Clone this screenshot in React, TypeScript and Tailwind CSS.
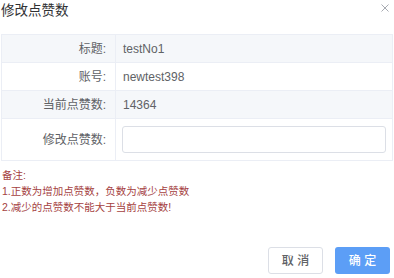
import type { ReactNode } from 'react';

const font = { fontFamily: '"Liberation Sans", "Noto Sans CJK SC", sans-serif' };

function Row({
  label,
  children,
  gray = false,
  last = false,
}: {
  label: string;
  children: ReactNode;
  gray?: boolean;
  last?: boolean;
}) {
  return (
    <div
      className={`flex ${last ? 'h-[41px]' : 'h-[28px] border-b border-[#ebeef5]'} ${gray ? 'bg-[#f5f7fa]' : 'bg-white'}`}
    >
      <div className="flex w-[114px] shrink-0 items-center justify-end border-r border-[#ebeef5] pr-[9px] text-[12px] text-[#606266]">
        {label}
      </div>
      <div className="flex min-w-0 flex-1 items-center pr-[6px] pl-[6px] text-[12px] text-[#606266]">
        {children}
      </div>
    </div>
  );
}

export default function App() {
  return (
    <div className="h-[278px] w-[394px] overflow-hidden bg-white" style={font}>
      <div className="flex h-[34px] items-start justify-between">
        <div className="pl-[1px] text-[13.5px] leading-[22px] text-[#303133]">修改点赞数</div>
        <svg className="mt-[4px] mr-[5px]" width="8" height="8" viewBox="0 0 8 8">
          <path d="M0.5 0.5L7.5 7.5M7.5 0.5L0.5 7.5" stroke="#a8abb2" strokeWidth="1" />
        </svg>
      </div>

      <div className="mx-[1px] border border-[#ebeef5]">
        <Row label="标题:" gray>
          <span className="pl-[1px]">testNo1</span>
        </Row>
        <Row label="账号:">
          <span className="pl-[1px]">newtest398</span>
        </Row>
        <Row label="当前点赞数:" gray>
          <span className="pl-[1px]">14364</span>
        </Row>
        <Row label="修改点赞数:" last>
          <input
            className="h-[27px] w-full rounded-[3px] border border-[#dcdfe6] bg-white px-2 text-[12px] outline-none"
            type="text"
          />
        </Row>
      </div>

      <div className="mt-[6px] pl-[2px] text-[10.5px] leading-[16px] text-[#a53f3f]">
        <div>备注:</div>
        <div>1.正数为增加点赞数，负数为减少点赞数</div>
        <div>2.减少的点赞数不能大于当前点赞数!</div>
      </div>

      <div className="mt-[32px] flex justify-end gap-[12px] pr-[4px]">
        <button className="h-[27px] w-[55px] rounded-[3px] border border-[#dcdfe6] bg-white text-[12px] font-medium text-[#606266]">
          取 消
        </button>
        <button className="h-[27px] w-[55px] rounded-[3px] bg-[#5c9ef6] text-[12px] font-medium text-white">
          确 定
        </button>
      </div>
    </div>
  );
}
